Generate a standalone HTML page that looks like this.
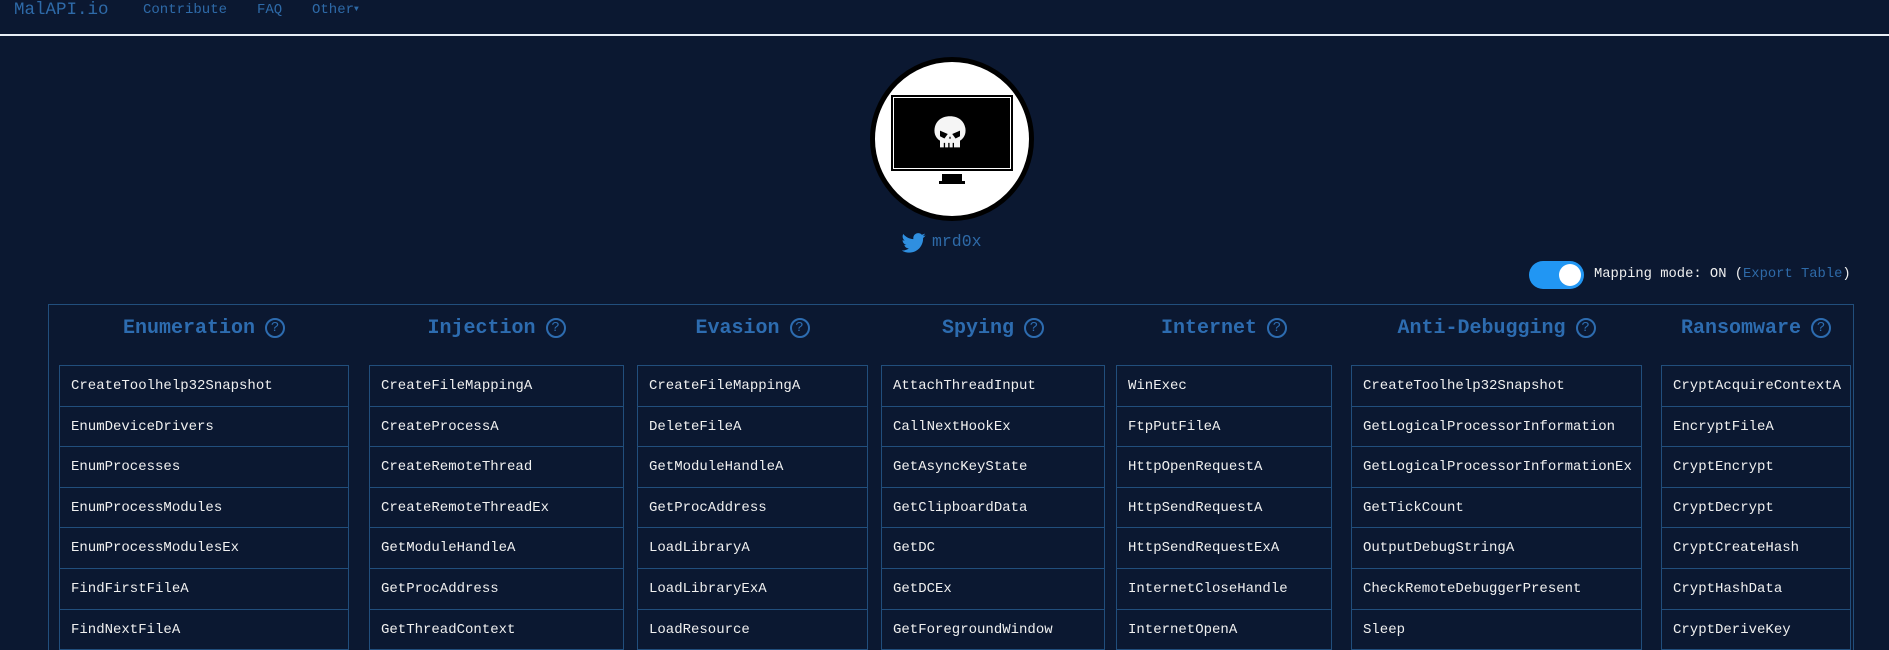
<!DOCTYPE html>
<html style="height:650px;overflow:hidden"><head><meta charset="utf-8"><style>
*{margin:0;padding:0;box-sizing:border-box}
body{width:1889px;height:650px;overflow:hidden;background:#0b1831;font-family:"Liberation Mono","Courier New",monospace;position:relative}
.nav{position:absolute;top:0;color:#2e6aa8;font-size:14px}
.line{position:absolute;left:0;top:34px;width:1889px;height:2px;background:#e8eef5}
.frame{position:absolute;left:48px;top:304px;width:1806px;height:360px;border:1px solid #214e7c}
.h{position:absolute;top:317px;color:#2d6cb0;font-weight:bold;font-size:20px;white-space:nowrap;text-align:center}
.q{display:inline-block;width:20px;height:20px;border:2px solid #2d6cb0;border-radius:50%;font-size:14px;line-height:16px;text-align:center;vertical-align:2px;margin-left:10px;font-weight:normal}
.col{position:absolute;top:365px;border:1px solid #214e7c;border-bottom:none}
.c{height:40.6px;border-bottom:1px solid #214e7c;color:#f0f0f0;font-size:14px;line-height:40px;padding-left:11px;white-space:nowrap}
</style></head><body>
<div class="nav" style="left:14px;top:0px;font-size:17.5px">MalAPI.io</div>
<div class="nav" style="left:143px;top:2px">Contribute</div>
<div class="nav" style="left:257px;top:2px">FAQ</div>
<div class="nav" style="left:312px;top:2px">Other<span style="font-size:8px;vertical-align:2px">▼</span></div>
<div class="line"></div>

<div style="position:absolute;left:870px;top:57px;width:164px;height:164px;border-radius:50%;background:#fff;border:5px solid #000"></div>
<div style="position:absolute;left:891px;top:95px;width:122px;height:76px;background:#000"></div>
<div style="position:absolute;left:893px;top:97px;width:118px;height:72px;border:1px solid #fff;background:#000"></div>
<svg style="position:absolute;left:930px;top:113px" width="40" height="42" viewBox="0 0 36 36"><path d="M18 2C9 2 4 8 4 15c0 5 3 8 5 9v6h18v-6c2-1 5-4 5-9 0-7-5-13-14-13z" fill="#f5f5f5"/><path d="M9 15l7 3-3 4-4-2zM27 15l-7 3 3 4 4-2z" fill="#000"/><path d="M17 22l1-2 1 2z" fill="#000"/><path d="M13 26v5M17 26v5M21 26v5" stroke="#000" stroke-width="1.2"/></svg>
<div style="position:absolute;left:942px;top:174px;width:20px;height:7px;background:#000"></div>
<div style="position:absolute;left:939px;top:181px;width:26px;height:3px;background:#000"></div>

<svg style="position:absolute;left:902px;top:233px" width="24" height="20" viewBox="0 0 24 20"><path d="M23.6 2.4c-.9.4-1.8.6-2.8.8 1-.6 1.8-1.6 2.1-2.7-.9.6-2 1-3.1 1.2C18.9.7 17.6.1 16.2.1c-2.7 0-4.9 2.2-4.9 4.9 0 .4 0 .8.1 1.1C7.3 5.9 3.7 4 1.3 1 .9 1.7.6 2.6.6 3.5c0 1.7.9 3.2 2.2 4.1-.8 0-1.6-.2-2.2-.6v.1c0 2.4 1.7 4.4 3.9 4.8-.4.1-.8.2-1.3.2-.3 0-.6 0-.9-.1.6 2 2.4 3.4 4.6 3.4-1.7 1.3-3.8 2.1-6.1 2.1-.4 0-.8 0-1.2-.1 2.2 1.4 4.8 2.2 7.5 2.2 9.1 0 14-7.5 14-14v-.6c1-.7 1.8-1.6 2.5-2.6z" fill="#2f8fe0"/></svg>
<div style="position:absolute;left:932px;top:232px;color:#2e6aa8;font-size:16.5px">mrd0x</div>

<div style="position:absolute;left:1529px;top:261px;width:55px;height:28px;border-radius:14px;background:#2196f3"></div>
<div style="position:absolute;left:1559px;top:264px;width:22px;height:22px;border-radius:50%;background:#fff"></div>
<div style="position:absolute;left:1594px;top:267px;color:#f0f0f0;font-size:13.8px;white-space:nowrap">Mapping mode: ON (<span style="color:#2e6aa8">Export Table</span>)</div>

<div class="frame"></div>
<div class="h" style="left:59px;width:290px">Enumeration<span class="q">?</span></div>
<div class="h" style="left:369px;width:255px">Injection<span class="q">?</span></div>
<div class="h" style="left:637px;width:231px">Evasion<span class="q">?</span></div>
<div class="h" style="left:881px;width:224px">Spying<span class="q">?</span></div>
<div class="h" style="left:1116px;width:216px">Internet<span class="q">?</span></div>
<div class="h" style="left:1351px;width:291px">Anti-Debugging<span class="q">?</span></div>
<div class="h" style="left:1661px;width:190px">Ransomware<span class="q">?</span></div>

<div style="position:absolute;left:0;top:0;width:1889px;height:650px;overflow:hidden">
<div class="col" style="left:59px;width:290px"><div class="c">CreateToolhelp32Snapshot</div><div class="c">EnumDeviceDrivers</div><div class="c">EnumProcesses</div><div class="c">EnumProcessModules</div><div class="c">EnumProcessModulesEx</div><div class="c">FindFirstFileA</div><div class="c">FindNextFileA</div></div>
<div class="col" style="left:369px;width:255px"><div class="c">CreateFileMappingA</div><div class="c">CreateProcessA</div><div class="c">CreateRemoteThread</div><div class="c">CreateRemoteThreadEx</div><div class="c">GetModuleHandleA</div><div class="c">GetProcAddress</div><div class="c">GetThreadContext</div></div>
<div class="col" style="left:637px;width:231px"><div class="c">CreateFileMappingA</div><div class="c">DeleteFileA</div><div class="c">GetModuleHandleA</div><div class="c">GetProcAddress</div><div class="c">LoadLibraryA</div><div class="c">LoadLibraryExA</div><div class="c">LoadResource</div></div>
<div class="col" style="left:881px;width:224px"><div class="c">AttachThreadInput</div><div class="c">CallNextHookEx</div><div class="c">GetAsyncKeyState</div><div class="c">GetClipboardData</div><div class="c">GetDC</div><div class="c">GetDCEx</div><div class="c">GetForegroundWindow</div></div>
<div class="col" style="left:1116px;width:216px"><div class="c">WinExec</div><div class="c">FtpPutFileA</div><div class="c">HttpOpenRequestA</div><div class="c">HttpSendRequestA</div><div class="c">HttpSendRequestExA</div><div class="c">InternetCloseHandle</div><div class="c">InternetOpenA</div></div>
<div class="col" style="left:1351px;width:291px"><div class="c">CreateToolhelp32Snapshot</div><div class="c">GetLogicalProcessorInformation</div><div class="c">GetLogicalProcessorInformationEx</div><div class="c">GetTickCount</div><div class="c">OutputDebugStringA</div><div class="c">CheckRemoteDebuggerPresent</div><div class="c">Sleep</div></div>
<div class="col" style="left:1661px;width:190px"><div class="c">CryptAcquireContextA</div><div class="c">EncryptFileA</div><div class="c">CryptEncrypt</div><div class="c">CryptDecrypt</div><div class="c">CryptCreateHash</div><div class="c">CryptHashData</div><div class="c">CryptDeriveKey</div></div>
</div>
</body></html>
